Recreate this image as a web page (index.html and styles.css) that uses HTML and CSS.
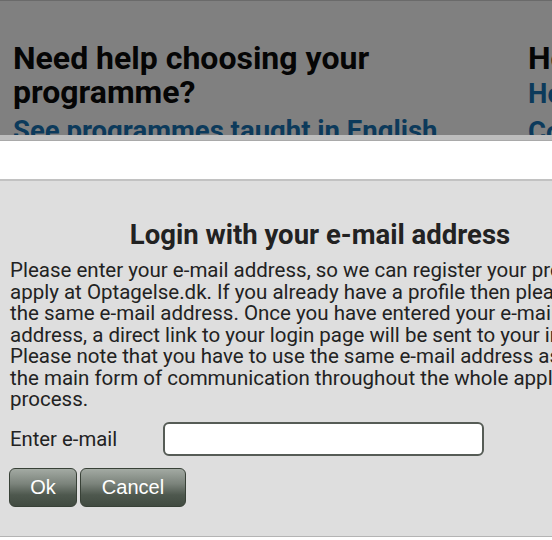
FILE: index.html
```html
<!DOCTYPE html>
<html>
  <head>
    <title>Login with your e-mail address</title>
    <link rel="stylesheet" href="styles.css">
  </head>
  <body>
    <div id="backdrop">
      <div class="col left">
        <h2>Need help choosing your programme?</h2>
        <a href="#">See programmes taught in English</a>
      </div>
      <div class="col right">
        <h2>How to apply</h2>
        <a href="#">How to apply</a>
        <a href="#">Contact</a>
      </div>
    </div>
    <div id="strip"></div>
    <div id="gap"></div>
    <div id="dialog">
      <h1>Login with your e-mail address</h1>
      <p>
        Please enter your e-mail address, so we can register your profile to<br>
        apply at Optagelse.dk. If you already have a profile then please use<br>
        the same e-mail address. Once you have entered your e-mail<br>
        address, a direct link to your login page will be sent to your inbox.<br>
        Please note that you have to use the same e-mail address as<br>
        the main form of communication throughout the whole application<br>
        process.
      </p>
      <div class="row">
        <label for="email">Enter e-mail</label>
        <input class="text" id="email" type="text"/>
      </div>
      <div class="buttons">
        <input class="button ok" type="button" value="Ok"/>
        <input class="button cancel" type="button" value="Cancel"/>
      </div>
    </div>
  </body>
</html>
```

FILE: styles.css
```css
html, body {
  margin: 0;
  padding: 0;
}

body {
  width: 552px;
  height: 540px;
  overflow: hidden;
  background-color: #FFFFFF;
  font-family: Roboto, "Liberation Sans", sans-serif;
}

#backdrop {
  display: flex;
  height: 134px;
  overflow: hidden;
  background-color: #808080;
  border-top: 1px solid #6A6A6A;
}

.col {
  display: flex;
  flex-direction: column;
  flex-shrink: 0;
}

.left {
  width: 515px;
  padding-left: 13px;
}

.right {
  width: 300px;
}

.col h2 {
  margin: 40px 0 0 0;
  font-size: 32px;
  line-height: 34px;
  font-weight: bold;
  color: #050505;
}

.col a {
  font-size: 27.5px;
  line-height: 38px;
  font-weight: bold;
  color: #0C3A5B;
  text-decoration: none;
  white-space: nowrap;
}

.left h2 {
  width: 440px;
}

.left a {
  margin-top: 3px;
}

.right h2 {
  white-space: nowrap;
  height: 34px;
}

.right a {
  line-height: 38px;
}

#strip {
  height: 5px;
  background-color: #BDBDBD;
  border-bottom: 1px solid #A9A9A9;
}

#gap {
  height: 38px;
}

#dialog {
  width: 640px;
  height: 355px;
  background-color: #DEDEDE;
  border-top: 2px solid #C2C2C2;
  border-bottom: 1px solid #B4B4B4;
  color: #222222;
}

#dialog h1 {
  margin: 39px 0 0 0;
  text-align: center;
  font-size: 27.5px;
  line-height: 30px;
  font-weight: bold;
  color: #222222;
}

#dialog p {
  margin: 10px 0 0 10px;
  font-size: 20.5px;
  line-height: 21.5px;
  white-space: nowrap;
}

.row {
  display: flex;
  align-items: center;
  margin-top: 11px;
  padding-left: 10px;
}

.row label {
  width: 153px;
  font-size: 20.3px;
}

input.text {
  width: 321px;
  height: 34px;
  box-sizing: border-box;
  border: 2px solid #565C56;
  border-radius: 6px;
  background-color: #FFFFFF;
}

.buttons {
  display: flex;
  gap: 3px;
  margin-top: 12px;
  padding-left: 9px;
}

input.button {
  height: 39px;
  box-sizing: border-box;
  border: 1px solid #384137;
  border-radius: 6px;
  background: linear-gradient(to bottom, #A3AAA3 0%, #7B837B 40%, #4E584E 70%, #414B41 100%);
  color: #FFFFFF;
  font-family: "Liberation Sans", Arial, sans-serif;
  font-size: 20px;
}

input.ok {
  width: 68px;
}

input.cancel {
  width: 106px;
}
```
